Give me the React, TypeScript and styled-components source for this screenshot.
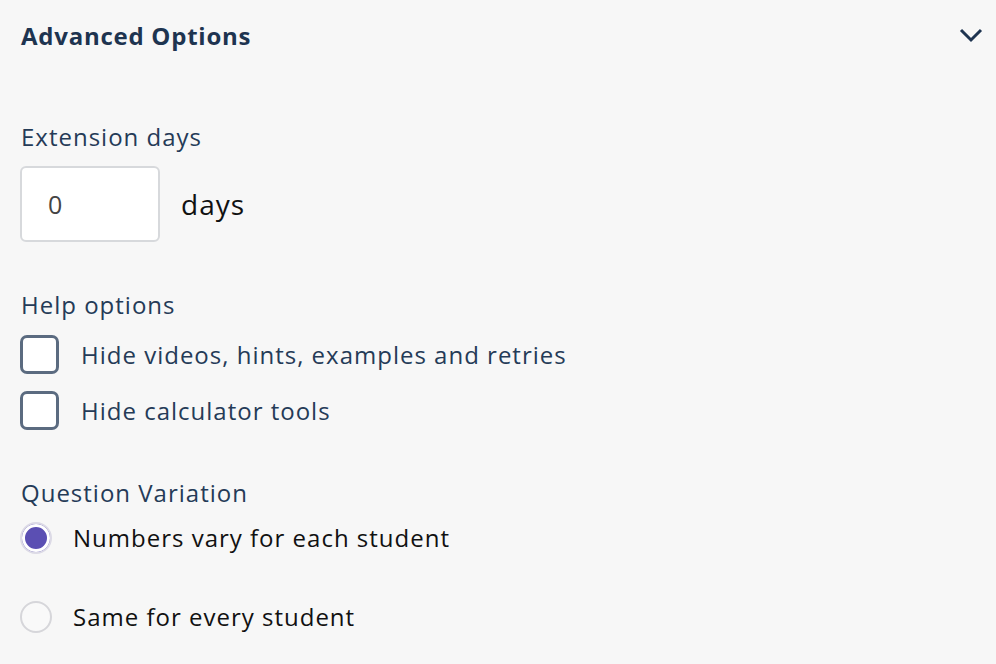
import styled, { createGlobalStyle } from "styled-components";

const GlobalStyle = createGlobalStyle`
    html, body {
        margin:0;
        padding:0;
        background:#f7f7f7;
    }
    body{
        font-family:"Open Sans", "Liberation Sans", sans-serif;
        letter-spacing:1px;
        -webkit-font-smoothing:antialiased;
    }
`;

const Panel = styled.div`
    width:996px;
    height:664px;
    box-sizing:border-box;
    padding:0 13px 0 20px;
    background:#f7f7f7;
    overflow:hidden;
`;

const Header = styled.div`
    display:flex;
    align-items:center;
    justify-content:space-between;
    height:70px;
    padding-left:1px;

    h2{
        margin:0;
        font-size:24px;
        font-weight:700;
        letter-spacing:0.75px;
        color:#1e3450;
    }
`;

const Section = styled.div<{ $top: number }>`
    margin-top:${(p) => p.$top}px;
`;

const Label = styled.div`
    height:32px;
    line-height:32px;
    padding-left:1px;
    font-size:24px;
    color:#253b57;
`;

const DaysRow = styled.div`
    display:flex;
    align-items:center;
    margin-top:13px;

    span{
        margin-left:21px;
        font-size:28px;
        color:#111;
    }
`;

const NumberInput = styled.input`
    box-sizing:border-box;
    width:140px;
    height:76px;
    padding:0 0 0 26px;
    font-family:inherit;
    font-size:25px;
    color:#444;
    background:#fff;
    border:2px solid #d7d9dc;
    border-radius:6px;
    outline:none;
`;

const CheckRow = styled.label<{ $gap: number }>`
    display:flex;
    align-items:center;
    margin-top:${(p) => p.$gap}px;
    font-size:24px;
    color:#253b57;
`;

const CheckBox = styled.span`
    box-sizing:border-box;
    width:39px;
    height:39px;
    margin-right:22px;
    background:#fff;
    border:3px solid #5b6b80;
    border-radius:7px;
`;

const RadioRow = styled.label<{ $gap: number }>`
    display:flex;
    align-items:center;
    height:32px;
    line-height:28px;
    margin-top:${(p) => p.$gap}px;
    font-size:24px;
    color:#111;
`;

const Radio = styled.span<{ $checked?: boolean }>`
    box-sizing:border-box;
    width:32px;
    height:32px;
    margin-right:21px;
    border-radius:50%;
    border:2px solid ${(p) => (p.$checked ? "#dcdae6" : "#d6d6da")};
    background:${(p) => (p.$checked ? "#5b4fb3" : "#f9f9f9")};
    box-shadow:${(p) => (p.$checked ? "inset 0 0 0 3px #fff" : "none")};
`;

export default function App() {
    return (
        <Panel>
            <GlobalStyle />
            <Header>
                <h2>Advanced Options</h2>
                <svg width="24" height="16" viewBox="0 0 24 16" fill="none">
                    <path d="M2 3l10 10L22 3" stroke="#1e3450" strokeWidth="3" />
                </svg>
            </Header>

            <Section $top={51}>
                <Label>Extension days</Label>
                <DaysRow>
                    <NumberInput type="text" defaultValue="0" />
                    <span>days</span>
                </DaysRow>
            </Section>

            <Section $top={47}>
                <Label>Help options</Label>
                <CheckRow $gap={14}>
                    <CheckBox />
                    Hide videos, hints, examples and retries
                </CheckRow>
                <CheckRow $gap={17}>
                    <CheckBox />
                    Hide calculator tools
                </CheckRow>
            </Section>

            <Section $top={47}>
                <Label>Question Variation</Label>
                <RadioRow $gap={13}>
                    <Radio $checked />
                    Numbers vary for each student
                </RadioRow>
                <RadioRow $gap={47}>
                    <Radio />
                    Same for every student
                </RadioRow>
            </Section>
        </Panel>
    );
}
